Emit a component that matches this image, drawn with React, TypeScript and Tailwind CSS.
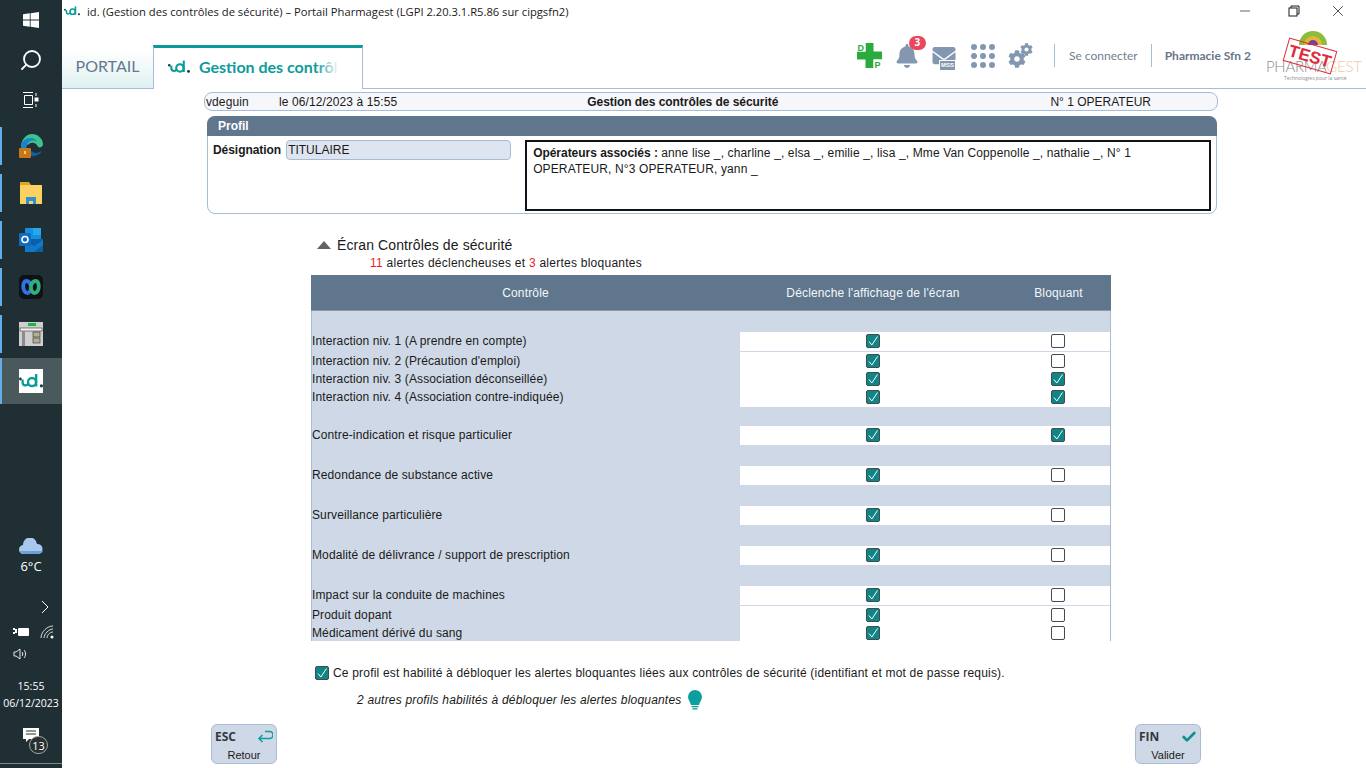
import { Fragment } from "react";
import { Check, Minus, Search, X } from "lucide-react";
import { FaBell, FaCog, FaEnvelope } from "react-icons/fa";

type Row = { label: string; on: boolean; block: boolean; h: number; gap: number };

const rows: Row[] = [
  { label: "Interaction niv. 1 (A prendre en compte)", on: true, block: false, h: 19, gap: 21 },
  { label: "Interaction niv. 2 (Précaution d'emploi)", on: true, block: false, h: 17, gap: 1 },
  { label: "Interaction niv. 3 (Association déconseillée)", on: true, block: true, h: 17, gap: 1 },
  { label: "Interaction niv. 4 (Association contre-indiquée)", on: true, block: true, h: 17, gap: 1 },
  { label: "Contre-indication et risque particulier", on: true, block: true, h: 19, gap: 21 },
  { label: "Redondance de substance active", on: true, block: false, h: 19, gap: 21 },
  { label: "Surveillance particulière", on: true, block: false, h: 19, gap: 21 },
  { label: "Modalité de délivrance / support de prescription", on: true, block: false, h: 19, gap: 21 },
  { label: "Impact sur la conduite de machines", on: true, block: false, h: 19, gap: 21 },
  { label: "Produit dopant", on: true, block: false, h: 17, gap: 1 },
  { label: "Médicament dérivé du sang", on: true, block: false, h: 17, gap: 1 },
];

const IdLogo = ({ className }: { className?: string }) => (
  <svg viewBox="0 0 24 14" className={`shrink-0 ${className ?? ""}`} fill="none">
    <circle cx="1.400" cy="5" r="1.400" fill="#0d3f49" />
    <path d="M3.600 5.500v2.700c0 4 4.600 4 6 1" stroke="#0b9a9a" strokeWidth="2.300" />
    <circle cx="13" cy="8" r="4" stroke="#0b9a9a" strokeWidth="2.300" />
    <path d="M17.200 0v12.500" stroke="#0b9a9a" strokeWidth="2.300" />
    <circle cx="22.400" cy="11.800" r="1.600" fill="#0d3f49" />
  </svg>
);

const Box = ({ on }: { on: boolean }) => (
  <span
    className={`flex h-[14px] w-[14px] shrink-0 items-center justify-center rounded-[2px] border border-[#444b4f] ${
      on ? "bg-[#0f8585]" : "bg-white"
    }`}
  >
    {on && (
      <svg viewBox="0 0 12 12" className="h-3 w-3" fill="none">
        <path d="M2 6.500 L4.800 10 L10.500 1.500" stroke="white" strokeWidth="1" />
      </svg>
    )}
  </span>
);

const TaskItem = ({ children }: { children: React.ReactNode }) => (
  <div className="mb-[9px] flex h-[38px] w-full items-center justify-center border-l-2 border-[#63aee6] pr-[2px]">
    {children}
  </div>
);

const Taskbar = () => (
  <aside className="flex h-[768px] w-[62px] shrink-0 flex-col items-center bg-[#1f2f33] text-white">
    <svg viewBox="0 0 16 16" className="mt-[12px] h-4 w-4" fill="white">
      <path d="M0 2.300 6.800 1.300v6.300H0zM7.600 1.200 16 0v7.600H7.600zM0 8.400h6.800v6.300L0 13.700zM7.600 8.400H16V16l-8.400-1.200z" />
    </svg>
    <Search className="mt-[20px] h-[24px] w-[24px] -scale-x-100" strokeWidth={1.8} />
    <svg viewBox="0 0 16 16" className="mt-[20px] h-4 w-4" fill="none" stroke="white" strokeWidth="1">
      <path d="M0 .5h10M0 15.500h10M1.500 3.500h8v9h-8zM13 1v3M13 12v3" />
      <rect x="12" y="6" width="3" height="3" fill="white" />
    </svg>
    <div className="mt-[19px] flex w-full flex-col">
      <TaskItem>
        <svg viewBox="0 0 24 24" className="h-6 w-6">
          <path d="M2 13C2 6 7 0 13 0c6 0 11 5 11 10 0 3-3 4-5 3-1-4-7-6-10-2-2-2-5 0-7 2z" fill="#3bc48c" />
          <path d="M2 13c0-6 5-9 10-9 3 0 5 2 6 4-4-3-9-1-10 3-1 3-1 6 1 9H3z" fill="#1b82d0" />
          <path d="M8 20c5 4 12 2 15-3-4 2-8 3-10 0z" fill="#0d5fa8" />
          <rect x="0" y="14" width="12" height="10" rx="1" fill="#c9761a" />
          <rect x="5" y="17" width="2" height="3" fill="#f6d27a" />
        </svg>
      </TaskItem>
      <TaskItem>
        <svg viewBox="0 0 24 24" className="h-6 w-6">
          <path d="M1 1h9l2 3H1z" fill="#e2a52c" />
          <rect x="1" y="4" width="22" height="19" fill="#fbd262" />
          <path d="M7 23v-7h10v7h-3v-3h-4v3z" fill="#2f8fd6" />
        </svg>
      </TaskItem>
      <TaskItem>
        <svg viewBox="0 0 24 24" className="h-6 w-6">
          <rect x="6" y="0" width="16" height="15" rx="1" fill="#1490df" />
          <rect x="14" y="0" width="8" height="7" fill="#28a8ea" />
          <path d="M6 11h18v13H7a1 1 0 0 1-1-1z" fill="#0a5fa8" />
          <path d="M6 12l9 6 9-6v5l-9 7H6z" fill="#1279c9" />
          <rect x="0" y="5" width="12" height="13" rx="1" fill="#0f6cbd" />
          <circle cx="6" cy="11.500" r="3" fill="none" stroke="white" strokeWidth="1.600" />
        </svg>
      </TaskItem>
      <TaskItem>
        <svg viewBox="0 0 24 24" className="h-6 w-6" fill="none">
          <rect width="24" height="24" rx="5" fill="#0f1214" />
          <path d="M12.500 12c-1.500-5-3-6-5-6-5 0-4 12 1 12 2 0 3-2 4-6" stroke="#2f73e6" strokeWidth="3.800" />
          <path d="M11.500 12c1.500-5 3-6 5-6 5 0 4 12-1 12-2 0-3-2-4-6" stroke="#2fae7e" strokeWidth="3.800" />
        </svg>
      </TaskItem>
      <TaskItem>
        <svg viewBox="0 0 24 24" className="h-6 w-6">
          <rect x="0" y="0" width="24" height="24" fill="#cfcfcf" />
          <rect x="9" y="1" width="8" height="3" fill="#1fb34a" />
          <rect x="1" y="6" width="22" height="3" fill="#f2f2f2" stroke="#333" strokeWidth="0.6" />
          <rect x="3" y="9" width="3" height="15" fill="#8c8c8c" />
          <rect x="14" y="10" width="7" height="5" fill="#b5ae8e" stroke="#333" strokeWidth="0.6" />
          <rect x="14" y="16" width="7" height="5" fill="#b5ae8e" stroke="#333" strokeWidth="0.6" />
        </svg>
      </TaskItem>
      <div className="-mt-[4px] flex h-[46px] w-full items-center justify-center border-l-2 border-[#63aee6] bg-[#4a5a5c] pr-[2px]">
        <span className="flex h-6 w-6 items-center justify-center bg-white">
          <IdLogo className="h-[14px] w-6" />
        </span>
      </div>
    </div>
    <svg viewBox="0 0 24 16" className="mt-[134px] h-[16px] w-[24px]">
      <path d="M5 16a4.500 4.500 0 0 1-1-9 7 7 0 0 1 14-1 5 5 0 0 1 1 10z" fill="#a9c8ee" />
      <path d="M5 16a4.500 4.500 0 0 1-4-3h23a5 5 0 0 1-5 3z" fill="#6d9fdc" />
    </svg>
    <span className="mt-[3px] font-['Open_Sans',sans-serif] text-[13px] leading-[18px]">6°C</span>
    <svg viewBox="0 0 8 14" className="ml-[28px] mt-[25px] h-[14px] w-2" fill="none" stroke="white">
      <path d="M1 1l6 6-6 6" />
    </svg>
    <div className="mt-[11px] flex w-full items-center pl-[13px]">
      <svg viewBox="0 0 16 10" className="h-[10px] w-4" fill="white">
        <path d="M0 1h2v2H0zM0 5h2v2H0zM2 2h2v4H2z" />
        <rect x="5" y="1" width="11" height="8" rx="1" />
      </svg>
      <svg viewBox="0 0 14 14" className="ml-[11px] h-[14px] w-[14px]" fill="none" stroke="#d8dede">
        <path d="M1 13C1 7 7 1 13 1M4 13c0-4 5-9 9-9M7 13c0-3 3-6 6-6" />
        <circle cx="12" cy="12" r="1.500" fill="white" stroke="none" />
      </svg>
    </div>
    <div className="mt-[8px] w-full pl-[13px]">
      <svg viewBox="0 0 16 14" className="h-[14px] w-4" fill="none" stroke="#e6e6e6">
        <path d="M1 5h2l4-3v10L3 9H1zM9 5c1 1 1 3 0 4M11 3c2 2 2 6 0 8" />
      </svg>
    </div>
    <span className="mt-[17px] font-['Open_Sans',sans-serif] text-[10.5px] leading-[16px]">15:55</span>
    <span className="mt-[1px] whitespace-nowrap font-['Open_Sans',sans-serif] text-[10.5px] leading-[16px]">
      06/12/2023
    </span>
    <div className="relative mt-[17px] h-[14px] w-4">
      <svg viewBox="0 0 16 14" className="h-[14px] w-4" fill="white">
        <path d="M0 0h16v11H6l-3 3v-3H0z" />
        <path d="M3 3h10M3 6h10" stroke="#1f2f33" />
      </svg>
      <span className="absolute left-[6px] top-[8px] flex h-[18px] w-[19px] items-center justify-center rounded-full border border-[#9aa5a5] bg-[#2a2f30] font-['Open_Sans',sans-serif] text-[11px] leading-none">
        13
      </span>
    </div>
    <span className="mb-[4px] mt-auto h-px w-full bg-[#7b8889]" />
  </aside>
);

const TopBar = () => (
  <>
    <div className="flex h-[45px] items-start font-['Open_Sans',sans-serif] text-[11.2px] text-[#1a1a1a]">
      <IdLogo className="ml-[2px] mt-[6px] h-[10px] w-[16px]" />
      <span className="ml-[7px] mt-[3px] leading-[17px]">
        id. (Gestion des contrôles de sécurité) – Portail Pharmagest (LGPI 2.20.3.1.R5.86 sur cipgsfn2)
      </span>
      <div className="ml-auto flex items-start">
        <Minus className="mt-[3px] h-4 w-4" strokeWidth={1} />
        <svg viewBox="0 0 12 12" className="ml-[35px] mt-[5px] h-3 w-3" fill="none" stroke="#1a1a1a">
          <rect x="1" y="3" width="8" height="8" />
          <path d="M3 3V1h8v8H9" />
        </svg>
        <X className="ml-[29px] mr-[19px] mt-[2px] h-[18px] w-[18px]" strokeWidth={1} />
      </div>
    </div>
    <div className="flex h-[44px] items-stretch border-b border-[#a9bcd6]">
      <div className="flex h-[38px] w-[91px] items-center justify-center self-end bg-gradient-to-b from-white to-[#dff0f0] pb-[6px] font-['Lato',sans-serif] text-[16px] text-[#64788f]">
        PORTAIL
      </div>
      <div className="relative -mb-px flex w-[210px] items-center overflow-hidden border-x border-b-0 border-x-[#a9bcd6] border-t-[3px] border-t-[#0b9a9a] bg-white pb-[3px] pl-[14px]">
        <IdLogo className="h-[14px] w-[22px]" />
        <span className="ml-[9px] whitespace-nowrap font-['Lato',sans-serif] text-[16px] font-bold text-[#0d9b9b]">
          Gestion des contrôles de sécurité
        </span>
        <span className="absolute inset-y-0 right-0 w-[46px] bg-gradient-to-r from-transparent via-white to-white" />
      </div>
      <div className="ml-auto flex items-center pb-[22px]">
        <svg viewBox="0 0 25 25" className="h-[25px] w-[25px]">
          <path d="M8.500 0h8v8.500H25v8h-8.500V25h-8v-8.500H0v-8h8.500z" fill="#29ab3d" />
          <rect x="0" y="0" width="8.500" height="8.500" fill="white" />
          <rect x="16.500" y="16.500" width="8.500" height="8.500" fill="white" />
          <text x="0.500" y="7.500" fontSize="9" fontWeight="700" fill="#29ab3d" fontFamily="Liberation Sans">D</text>
          <text x="17.500" y="24.500" fontSize="9" fontWeight="700" fill="#29ab3d" fontFamily="Liberation Sans">P</text>
        </svg>
        <div className="relative ml-[13px]">
          <FaBell className="h-6 w-6 text-[#8497b0]" />
          <span className="absolute -top-[8px] left-[14px] flex h-[14px] w-[17px] items-center justify-center rounded-full bg-[#e9475c] font-['Open_Sans',sans-serif] text-[10px] font-bold text-white">
            3
          </span>
        </div>
        <div className="relative ml-[13px] h-[24px] w-[25px]">
          <FaEnvelope className="h-[23px] w-[24px] text-[#8497b0]" />
          <span className="absolute -bottom-[2px] left-[8px] bg-[#8497b0] px-[1px] font-['Liberation_Sans',sans-serif] text-[6px] font-bold leading-[9px] text-white outline outline-1 outline-white">
            MSS
          </span>
        </div>
        <div className="ml-[14px] grid grid-cols-3 gap-x-[3px] gap-y-[3px]">
          {Array.from({ length: 9 }).map((_, i) => (
            <span key={i} className="h-[6px] w-[6px] rounded-full bg-[#8497b0]" />
          ))}
        </div>
        <div className="relative ml-[13px] h-[25px] w-[25px] text-[#8497b0]">
          <FaCog className="absolute bottom-0 left-0 h-[18px] w-[18px]" />
          <FaCog className="absolute right-0 top-0 h-[13px] w-[13px]" />
        </div>
        <span className="ml-[21px] h-[23px] w-px bg-[#a9bcd6]" />
        <span className="ml-[14px] font-['Lato',sans-serif] text-[12px] text-[#6f7f92]">Se connecter</span>
        <span className="ml-[13px] h-[23px] w-px bg-[#a9bcd6]" />
        <span className="ml-[13px] font-['Lato',sans-serif] text-[12px] font-bold text-[#66768a]">Pharmacie Sfn 2</span>
        <div className="relative ml-[15px] mr-[7px] h-[44px] w-[93px]">
          <svg viewBox="0 0 28 14" className="absolute -top-[3px] left-[33px] h-[14px] w-[28px]">
            <path d="M0 14a14 14 0 0 1 28 0z" fill="#8bbd3d" />
            <path d="M5 14a9 9 0 0 1 18 0z" fill="#e7b53a" />
            <path d="M9 14a5 5 0 0 1 10 0z" fill="#7b3f98" />
          </svg>
          <span className="absolute left-0 top-[22px] whitespace-nowrap font-['Lato',sans-serif] text-[15px] font-light leading-[20px] tracking-[-0.3px] text-[#8a8a8a]">
            PHARMA<span className="text-[#f2c9a3]">GEST</span>
          </span>
          <span className="absolute left-[18px] top-[40px] whitespace-nowrap font-['Open_Sans',sans-serif] text-[5px] leading-[8px] text-[#8a8a8a]">
            Technologies pour la santé
          </span>
          <span className="absolute left-[19px] top-[10px] flex h-[24px] w-[50px] rotate-[16deg] items-center justify-center border-[1.5px] border-[#e02b3b] font-['Liberation_Sans',sans-serif] text-[17px] font-bold leading-none text-[#e02b3b]">
            TEST
          </span>
        </div>
      </div>
    </div>
  </>
);

const Btn = ({ k, label, children }: { k: string; label: string; children: React.ReactNode }) => (
  <div className="flex h-10 w-[66px] flex-col rounded-[6px] border border-[#a9bcd6] bg-[#cfd8e6] px-[3px] text-[#1a1a1a]">
    <div className="flex items-center justify-between pt-[3px]">
      <span className="font-['Open_Sans',sans-serif] text-[12px] font-bold leading-[18px] text-[#33383f]">{k}</span>
      {children}
    </div>
    <span className="mt-[2px] text-center text-[11px] leading-[14px]">{label}</span>
  </div>
);

export default function App() {
  return (
    <div className="flex h-[768px] w-[1366px] overflow-hidden bg-white font-['Liberation_Sans',sans-serif] text-[12px] text-[#1a1a1a]">
      <Taskbar />
      <main className="flex min-w-0 flex-1 flex-col">
        <TopBar />
        <div className="flex flex-col pl-[142px]">
          <div className="relative mt-[3px] flex h-[19px] w-[1014px] items-center rounded-lg border border-[#a9bcd6] bg-[#f5f7fb] pl-px leading-none">
            <span className="w-[73px] tracking-[0.1px]">vdeguin</span>
            <span className="tracking-[0.1px]">le 06/12/2023 à 15:55</span>
            <span className="ml-[190px] whitespace-nowrap font-bold tracking-[-0.05px]">
              Gestion des contrôles de sécurité
            </span>
            <span className="ml-auto mr-[66px] whitespace-nowrap">N° 1 OPERATEUR</span>
          </div>
          <section className="ml-[3px] mt-[5px] h-[98px] w-[1010px] rounded-lg border border-[#a9bcd6]">
            <h2 className="-mx-px -mt-px h-[20px] rounded-t-lg bg-[#5f768d] pl-[11px] text-[12px] font-bold leading-[20px] text-white">
              Profil
            </h2>
            <div className="flex pl-[5px] pt-[4px]">
              <span className="mt-[3px] font-bold leading-[14px] tracking-[-0.05px]">Désignation</span>
              <span className="ml-[5px] h-[20px] w-[225px] rounded-[4px] border border-[#a9bcd6] bg-[#dfe5f0] pl-px leading-[18px]">
                TITULAIRE
              </span>
              <div className="ml-[14px] h-[71px] w-[686px] border-2 border-[#10141a] pl-[6px] pr-[4px] pt-[3px] leading-[16px] tracking-[0.13px]">
                <strong className="font-bold tracking-[-0.03px]">Opérateurs associés : </strong>
                anne lise _, charline _, elsa _, emilie _, lisa _, Mme Van Coppenolle _, nathalie _, N° 1 OPERATEUR, N°3
                OPERATEUR, yann _
              </div>
            </div>
          </section>
          <div className="ml-[111px] mt-[23px] flex items-center">
            <span className="ml-[2px] h-0 w-0 border-x-[7px] border-b-[8px] border-x-transparent border-b-[#5f6366]" />
            <span className="ml-[6px] text-[14px] leading-[16px] tracking-[0.1px]">Écran Contrôles de sécurité</span>
          </div>
          <p className="ml-[166px] mt-[3px] text-[12px] leading-[14px] tracking-[0.25px]">
            <span className="text-[#ee1c1c]">11</span> alertes déclencheuses et <span className="text-[#ee1c1c]">3</span>{" "}
            alertes bloquantes
          </p>
          <div className="ml-[107px] mt-[5px] w-[800px]">
            <div className="grid h-[36px] grid-cols-[429px_266px_105px] items-center border-b border-[#8a98a8] bg-[#5f768d] text-center tracking-[0.15px] text-[#f4f6f9]">
              <span>Contrôle</span>
              <span>Déclenche l'affichage de l'écran</span>
              <span>Bloquant</span>
            </div>
            <div className="h-[330px] border-x border-[#a9bcd6] bg-[#cfd8e6]">
              {rows.map((r) => (
                <Fragment key={r.label}>
                  <div style={{ height: r.gap }} />
                  <div className="grid grid-cols-[428px_266px_104px] items-center" style={{ height: r.h }}>
                    <span className="whitespace-nowrap pb-[1px] tracking-[0.12px]">{r.label}</span>
                    <div className={`flex h-full items-center justify-center bg-white ${r.h === 17 ? "pb-[2px]" : "pb-[1px]"}`}>
                      <Box on={r.on} />
                    </div>
                    <div className={`flex h-full items-center justify-center bg-white ${r.h === 17 ? "pb-[2px]" : "pb-[1px]"}`}>
                      <Box on={r.block} />
                    </div>
                  </div>
                </Fragment>
              ))}
            </div>
          </div>
          <div className="ml-[111px] mt-[25px] flex items-center">
            <Box on />
            <span className="ml-[4px] leading-[14px] tracking-[0.19px]">
              Ce profil est habilité à débloquer les alertes bloquantes liées aux contrôles de sécurité (identifiant et
              mot de passe requis).
            </span>
          </div>
          <div className="ml-[153px] mt-[10px] flex h-[20px] items-center">
            <em className="leading-[14px] tracking-[0.19px]">
              2 autres profils habilités à débloquer les alertes bloquantes
            </em>
            <svg viewBox="0 0 14 20" className="ml-[7px] h-5 w-[14px] shrink-0" fill="#0b9f9f">
              <path d="M7 0a7 7 0 0 1 7 7c0 3-2.500 5-3 8H3C2.500 12 0 10 0 7a7 7 0 0 1 7-7z" />
              <rect x="3.500" y="16" width="7" height="1.300" />
              <rect x="4.500" y="18.200" width="5" height="1.300" />
            </svg>
          </div>
          <div className="ml-[7px] mt-[14px] flex w-[990px] justify-between">
            <Btn k="ESC" label="Retour">
              <svg viewBox="0 0 16 14" className="h-[14px] w-4" fill="none" stroke="#0b9f9f" strokeWidth="1.600">
                <path d="M8 1.500h4.500a3.500 3.500 0 0 1 0 7H2M5.500 5 2 8.500 5.500 12" />
              </svg>
            </Btn>
            <Btn k="FIN" label="Valider">
              <Check className="h-4 w-4 text-[#0f8f8f]" strokeWidth={4} />
            </Btn>
          </div>
        </div>
      </main>
    </div>
  );
}
